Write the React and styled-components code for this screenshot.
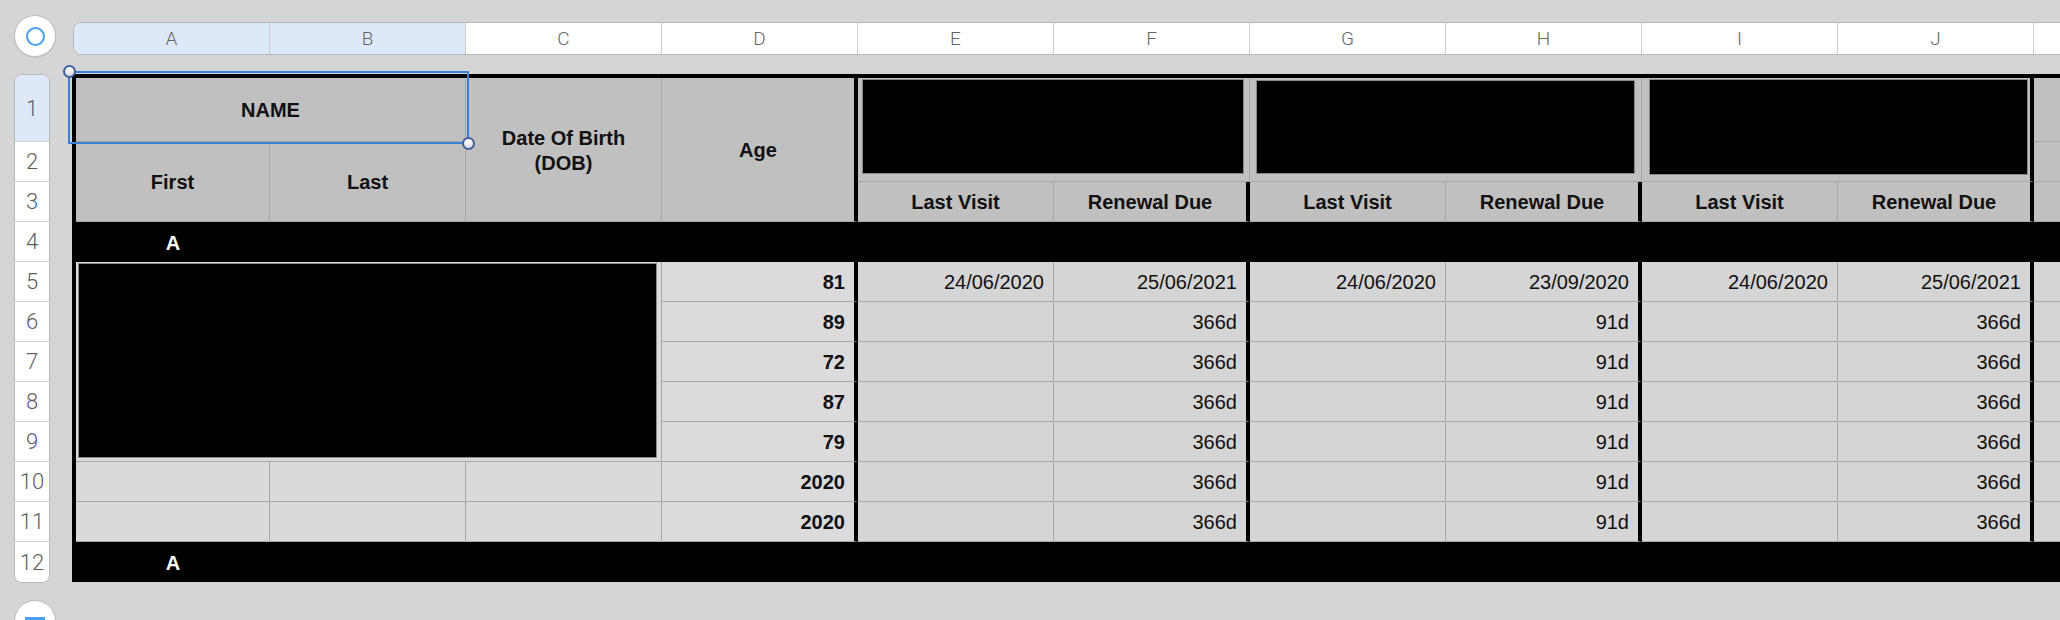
import React from "react";
import styled, { createGlobalStyle } from "styled-components";

const GlobalStyle = createGlobalStyle`
  html, body {
    margin: 0;
    padding: 0;
    background: #d5d5d5;
    overflow: hidden;
  }
  body {
    font-family: "Liberation Sans", Arial, sans-serif;
  }
`;

const Page = styled.div`
  width: 2060px;
  height: 620px;
  box-sizing: border-box;
  overflow: hidden;
  padding: 15px 0 0 14px;
  display: grid;
  grid-template-columns: 42px minmax(0, 1fr);
  grid-template-rows: 42px 509px 42px;
  column-gap: 16px;
  row-gap: 17px;
`;

const CircleButton = styled.div`
  width: 42px;
  height: 42px;
  box-sizing: border-box;
  border-radius: 50%;
  background: #fff;
  border: 1px solid #bcbcbc;
  box-shadow: 0 1px 1px rgba(0, 0, 0, 0.08);
  display: flex;
  justify-content: center;
  align-items: ${(p) => (p.$top ? "center" : "flex-start")};
`;

const Ring = styled.div`
  width: 19px;
  height: 19px;
  box-sizing: border-box;
  border-radius: 50%;
  border: 2px solid #4aa0f5;
`;

const Dash = styled.div`
  width: 20px;
  height: 3px;
  margin-top: 16px;
  background: #4aa0f5;
`;

const ColumnBar = styled.div`
  margin: 7px 0 0 1px;
  height: 33px;
  box-sizing: border-box;
  display: flex;
  border: 1px solid #b6b6b6;
  border-right: none;
  border-radius: 8px 0 0 8px;
  overflow: hidden;
  background: #fff;
`;

const ColLetter = styled.div`
  flex: 0 0 196px;
  box-sizing: border-box;
  border-right: 1px solid #cdcdcd;
  background: ${(p) => (p.$selected ? "#dde9f9" : "#fff")};
  display: flex;
  align-items: center;
  justify-content: center;
  font-family: Roboto, Lato, "Liberation Sans", sans-serif;
  font-size: 19px;
  font-weight: 300;
  color: #666;
`;

const RowHeader = styled.div`
  width: 36px;
  height: 509px;
  box-sizing: border-box;
  border: 1px solid #b8b8b8;
  border-radius: 8px;
  background: #fff;
  overflow: hidden;
  display: flex;
  flex-direction: column;
`;

const RowNum = styled.div`
  flex: 0 0 ${(p) => p.$h}px;
  box-sizing: border-box;
  border-bottom: 1px solid #d3d3d3;
  background: ${(p) => (p.$selected ? "#dde9f9" : "#fff")};
  display: flex;
  align-items: center;
  justify-content: center;
  font-family: Roboto, Lato, "Liberation Sans", sans-serif;
  font-size: 22px;
  font-weight: 300;
  color: #5e5e5e;
  &:last-child {
    border-bottom: none;
  }
`;

const TableArea = styled.div`
  position: relative;
  min-width: 0;
`;

const Table = styled.div`
  display: grid;
  grid-template-columns: 194px repeat(10, 196px);
  grid-template-rows: 64px repeat(11, 40px);
  width: max-content;
  border-top: 4px solid #000;
  border-left: 4px solid #000;
  background: #d5d5d5;
`;

const Cell = styled.div`
  box-sizing: border-box;
  grid-column: ${(p) => p.$col};
  grid-row: ${(p) => p.$row};
  background: ${(p) => p.$bg || "#d5d5d5"};
  border-right: ${(p) => (p.$thick ? "4px solid #000" : "1px solid #a8a8a8")};
  border-bottom: 1px solid #a8a8a8;
  display: flex;
  align-items: center;
  justify-content: ${(p) => (p.$right ? "flex-end" : "center")};
  padding: ${(p) => (p.$right ? "2px 9px 0 0" : "2px 0 0")};
  font-size: 20px;
  line-height: 25px;
  font-weight: ${(p) => (p.$bold ? 700 : 400)};
  color: #111;
  text-align: center;
`;

const HeadCell = styled(Cell)`
  background: #bfc0bf;
  font-weight: 700;
`;

const RedactCell = styled(Cell)`
  align-items: stretch;
  justify-content: stretch;
  padding: ${(p) => p.$pad};
`;

const Redact = styled.div`
  flex: 1;
  box-sizing: border-box;
  background: #000;
  border: 1px solid #8a8a8a;
`;

const GroupRow = styled.div`
  grid-column: 1 / -1;
  grid-row: ${(p) => p.$row};
  background: #000;
  display: flex;
  align-items: center;
  padding-top: 2px;
`;

const GroupLabel = styled.div`
  width: 194px;
  text-align: center;
  color: #fff;
  font-size: 20px;
  font-weight: 700;
`;

const Selection = styled.div`
  position: absolute;
  left: -4px;
  top: -3px;
  width: 401px;
  height: 73px;
  box-sizing: border-box;
  border: 2px solid #3b7fd4;
  pointer-events: none;
`;

const Handle = styled.div`
  position: absolute;
  left: ${(p) => p.$x}px;
  top: ${(p) => p.$y}px;
  width: 13px;
  height: 13px;
  box-sizing: border-box;
  border-radius: 50%;
  border: 2px solid #3f5f9f;
  background: linear-gradient(#ffffff, #dcdcdc);
`;

// K is only a sliver at the right edge, its letter sits off screen
const letters = ["A", "B", "C", "D", "E", "F", "G", "H", "I", "J", ""];

const rows = [
  { age: 81, e: "24/06/2020", f: "25/06/2021", g: "24/06/2020", h: "23/09/2020", i: "24/06/2020", j: "25/06/2021" },
  { age: 89, f: "366d", h: "91d", j: "366d" },
  { age: 72, f: "366d", h: "91d", j: "366d" },
  { age: 87, f: "366d", h: "91d", j: "366d" },
  { age: 79, f: "366d", h: "91d", j: "366d" },
  { age: 2020, f: "366d", h: "91d", j: "366d" },
  { age: 2020, f: "366d", h: "91d", j: "366d" },
];

const visitGroups = [
  { col: "5 / 7", pad: "1px 5px 7px 4px" },
  { col: "7 / 9", pad: "2px 6px 7px 6px" },
  { col: "9 / 11", pad: "1px 2px 6px 7px", thick: true },
];

export default function App() {
  return (
    <>
      <GlobalStyle />
      <Page>
        <CircleButton $top>
          <Ring />
        </CircleButton>
        <ColumnBar>
          {letters.map((l, i) => (
            <ColLetter key={i} $selected={i < 2}>
              {l}
            </ColLetter>
          ))}
        </ColumnBar>

        <RowHeader>
          {Array.from({ length: 12 }, (_, i) => (
            <RowNum key={i} $h={i === 0 ? 67 : 40} $selected={i === 0}>
              {i + 1}
            </RowNum>
          ))}
        </RowHeader>

        <TableArea>
          <Table>
            <HeadCell $col="1 / 3" $row="1">NAME</HeadCell>
            <HeadCell $col="1" $row="2 / 4">First</HeadCell>
            <HeadCell $col="2" $row="2 / 4">Last</HeadCell>
            <HeadCell $col="3" $row="1 / 4">
              Date Of Birth
              <br />
              (DOB)
            </HeadCell>
            <HeadCell $col="4" $row="1 / 4" $thick>Age</HeadCell>

            {visitGroups.map((g) => (
              <RedactCell key={g.col} $col={g.col} $row="1 / 3" $bg="#bfc0bf" $pad={g.pad} $thick={g.thick}>
                <Redact />
              </RedactCell>
            ))}
            <HeadCell $col="11" $row="1" />
            <HeadCell $col="11" $row="2" />

            {[5, 7, 9].map((c) => (
              <React.Fragment key={c}>
                <HeadCell $col={String(c)} $row="3">Last Visit</HeadCell>
                <HeadCell $col={String(c + 1)} $row="3" $thick>Renewal Due</HeadCell>
              </React.Fragment>
            ))}
            <HeadCell $col="11" $row="3" />

            <GroupRow $row="4">
              <GroupLabel>A</GroupLabel>
            </GroupRow>

            <RedactCell $col="1 / 4" $row="5 / 10" $bg="#dadada" $pad="1px 4px 3px 2px">
              <Redact />
            </RedactCell>

            {rows.map((r, idx) => {
              const row = String(5 + idx);
              return (
                <React.Fragment key={idx}>
                  {idx >= 5 &&
                    [1, 2, 3].map((c) => <Cell key={c} $col={String(c)} $row={row} $bg="#dadada" />)}
                  <Cell $col="4" $row={row} $bg="#dbdbdb" $right $bold $thick>{r.age}</Cell>
                  <Cell $col="5" $row={row} $right>{r.e}</Cell>
                  <Cell $col="6" $row={row} $right $thick>{r.f}</Cell>
                  <Cell $col="7" $row={row} $right>{r.g}</Cell>
                  <Cell $col="8" $row={row} $right $thick>{r.h}</Cell>
                  <Cell $col="9" $row={row} $right>{r.i}</Cell>
                  <Cell $col="10" $row={row} $right $thick>{r.j}</Cell>
                  <Cell $col="11" $row={row} />
                </React.Fragment>
              );
            })}

            <GroupRow $row="12">
              <GroupLabel>A</GroupLabel>
            </GroupRow>
          </Table>

          <Selection>
            <Handle $x={-7} $y={-8} />
            <Handle $x={392} $y={64} />
          </Selection>
        </TableArea>

        <CircleButton>
          <Dash />
        </CircleButton>
      </Page>
    </>
  );
}
